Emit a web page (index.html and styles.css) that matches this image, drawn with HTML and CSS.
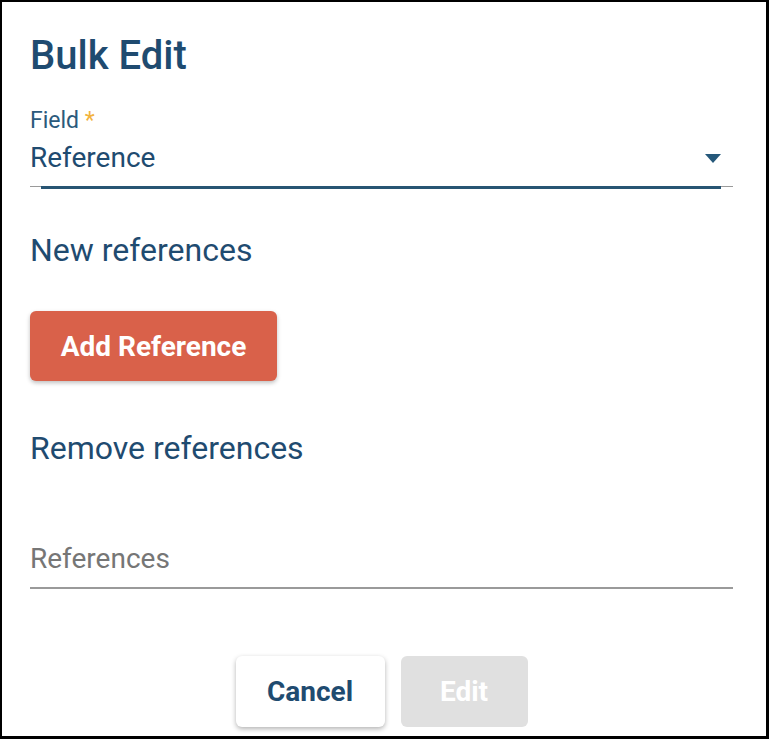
FILE: index.html
```html
<!DOCTYPE html>
<html lang="en">
<head>
<meta charset="utf-8">
<title>Bulk Edit</title>
<link rel="stylesheet" href="styles.css">
</head>
<body>
<div class="dialog">
  <h1 class="dialog-title">Bulk Edit</h1>

  <div class="select-field">
    <label class="select-label">Field <span class="required">*</span></label>
    <div class="select-row">
      <span class="select-value">Reference</span>
      <svg class="select-arrow" width="16" height="9" viewBox="0 0 16 9"><path d="M0 0 H16 L8 9 Z" fill="#25587a"/></svg>
    </div>
    <div class="select-line"><div class="select-line-focus"></div></div>
  </div>

  <h2 class="section-title section-new">New references</h2>
  <button class="btn btn-primary" type="button">Add Reference</button>

  <h2 class="section-title section-remove">Remove references</h2>

  <div class="text-field">
    <input class="text-input" type="text" placeholder="References">
  </div>

  <div class="actions">
    <button class="btn btn-cancel" type="button">Cancel</button>
    <button class="btn btn-disabled" type="button" disabled>Edit</button>
  </div>
</div>
</body>
</html>
```

FILE: styles.css
```css
* { box-sizing: border-box; }

html, body {
  margin: 0;
  padding: 0;
  background: #fff;
}

body {
  font-family: Roboto, "Noto Sans", "Liberation Sans", sans-serif;
  color: #1f4b70;
}

.dialog {
  width: 769px;
  height: 739px;
  border-style: solid;
  border-color: #000;
  border-width: 2px 3px 3px 2px;
  padding: 0 33px 0 28px;
  display: flex;
  flex-direction: column;
  align-items: flex-start;
}

.dialog-title {
  margin: 29px 0 0 0;
  font-size: 40px;
  line-height: 50px;
  font-weight: 500;
  color: #1f4b70;
}

.select-field {
  width: 100%;
  margin-top: 26px;
}

.select-label {
  display: block;
  font-size: 23px;
  line-height: 28px;
  color: #2b5a7c;
}

.required { color: #f2b33d; }

.select-row {
  display: flex;
  align-items: center;
  justify-content: space-between;
  height: 34px;
  margin-top: 6px;
  padding-right: 12px;
}

.select-value {
  font-size: 28px;
  line-height: 34px;
  color: #1f4b70;
}

.select-arrow { display: block; }

.select-line {
  height: 1px;
  margin-top: 11px;
  background: #9a9a9a;
  position: relative;
}

.select-line-focus {
  position: absolute;
  left: 11px;
  right: 12px;
  top: 0;
  height: 3px;
  background: #285573;
}

.section-title {
  margin: 0;
  font-size: 32px;
  line-height: 40px;
  font-weight: 400;
  color: #1f4b70;
}

.section-new { margin-top: 43px; }
.section-remove { margin-top: 47px; }

.btn {
  font-family: inherit;
  border: none;
  border-radius: 6px;
  font-size: 28px;
  font-weight: 700;
  cursor: pointer;
}

.btn-primary {
  margin-top: 41px;
  width: 247px;
  height: 70px;
  background: #d9614a;
  color: #fff;
  box-shadow: 0 2px 4px rgba(0,0,0,0.25);
}

.text-field {
  width: 100%;
  margin-top: 73px;
  padding-bottom: 12px;
  border-bottom: 2px solid #9a9a9a;
}

.text-input {
  display: block;
  width: 100%;
  border: none;
  outline: none;
  padding: 0;
  height: 34px;
  font-family: inherit;
  font-size: 28px;
  color: #1f4b70;
  background: transparent;
}

.text-input::placeholder { color: #767676; }

.actions {
  width: 100%;
  display: flex;
  justify-content: center;
  gap: 16px;
  margin-top: 67px;
}

.btn-cancel {
  width: 149px;
  height: 71px;
  background: #fff;
  color: #1f4b70;
  box-shadow: 0 2px 5px rgba(0,0,0,0.3);
}

.btn-disabled {
  width: 127px;
  height: 71px;
  background: #e0e0e0;
  color: #fff;
  cursor: default;
}
```
